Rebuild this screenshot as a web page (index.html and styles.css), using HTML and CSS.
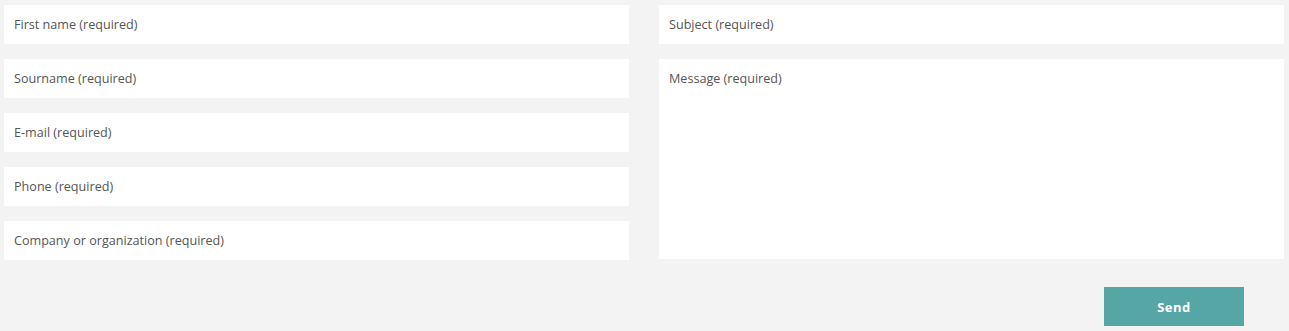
FILE: index.html
```html
<!DOCTYPE html>
<html lang="en">
<head>
    <meta charset="UTF-8">
    <meta name="viewport" content="width=device-width, initial-scale=1.0">
    <title>Contact</title>
    <link rel="stylesheet" href="styles.css">
</head>
<body>
    <form class="contact-form">
        <div class="form-grid">
            <div class="form-col">
                <input type="text" placeholder="First name (required)">
                <input type="text" placeholder="Sourname (required)">
                <input type="email" placeholder="E-mail (required)">
                <input type="tel" placeholder="Phone (required)">
                <input type="text" placeholder="Company or organization (required)">
            </div>
            <div class="form-col">
                <input type="text" placeholder="Subject (required)">
                <textarea placeholder="Message (required)"></textarea>
            </div>
        </div>
        <div class="form-actions">
            <button type="submit">Send</button>
        </div>
    </form>
</body>
</html>
```

FILE: styles.css
```css
/* Base */
body {
    margin: 0;
    background: #f3f3f3;
    font-family: 'Open Sans', sans-serif;
}

.contact-form {
    padding: 5px 5px 0 4px;
}

.form-grid {
    display: grid;
    grid-template-columns: 625px 625px;
    column-gap: 30px;
}

.form-col {
    display: flex;
    flex-direction: column;
    gap: 15px;
}

input,
textarea {
    box-sizing: border-box;
    display: block;
    background: #fff;
    border: none;
    outline: none;
    margin: 0;
    width: 100%;
    padding: 0 10px;
    font-family: 'Open Sans', sans-serif;
    font-size: 12.6px;
    color: #555;
}

input {
    height: 39px;
}

textarea {
    height: 200px;
    padding-top: 11px;
    line-height: 17px;
    resize: none;
}

input::placeholder,
textarea::placeholder {
    color: #555;
    opacity: 1;
}

.form-actions {
    display: flex;
    justify-content: flex-end;
    padding: 27px 40px 0 0;
}

button {
    width: 140px;
    height: 39px;
    border: none;
    background: #56a6a6;
    color: #fff;
    font-family: 'Open Sans', sans-serif;
    font-size: 13px;
    font-weight: bold;
    letter-spacing: 0.5px;
}
```
